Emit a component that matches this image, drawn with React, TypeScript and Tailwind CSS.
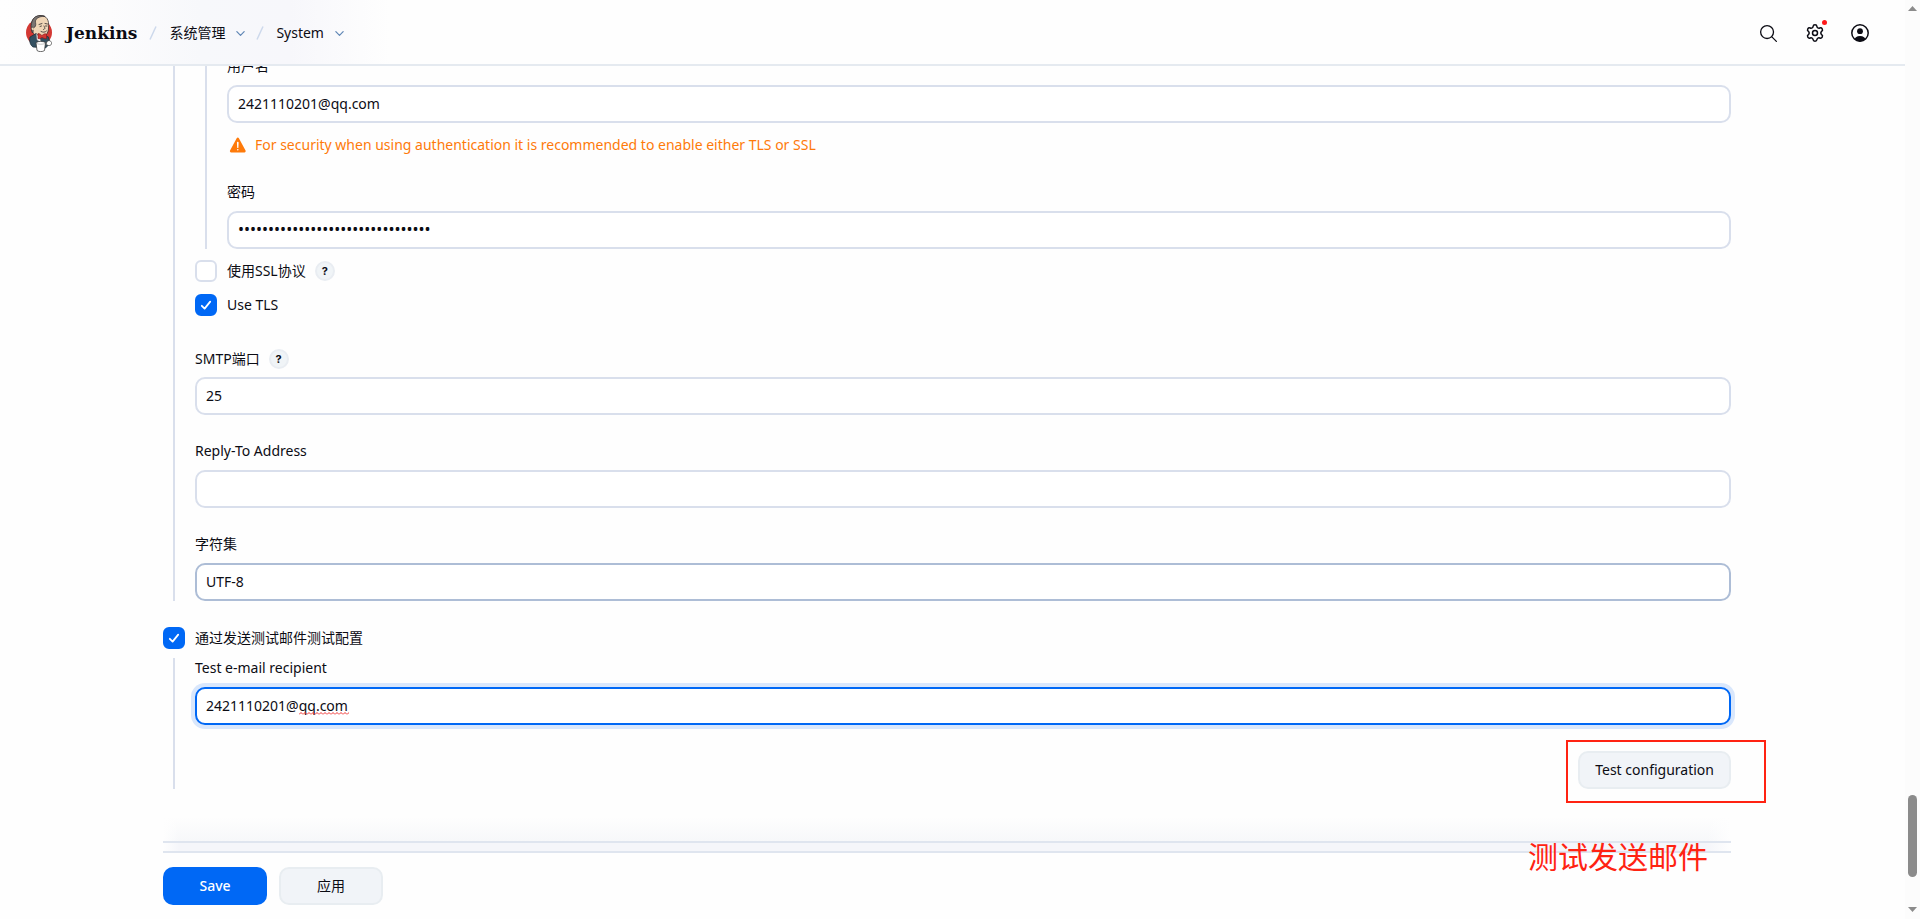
import { useState } from "react";
import type { ReactNode } from "react";
import { Settings } from "lucide-react";
import { IoChevronDown, IoSearchOutline, IoWarning } from "react-icons/io5";

const INPUT =
  "block h-[38px] w-full rounded-[10px] border-2 bg-white px-[9px] pb-[2px] text-[#0c0c14] outline-none";

function JenkinsLogo() {
  return (
    <svg viewBox="0 0 52 74" className="h-[37px] w-[26px]" aria-hidden="true">
      <ellipse cx="26" cy="35" rx="26" ry="26" fill="#d33833" />
      <path d="M11 27C8 13 15 2 29 1c12 0 18 9 16 25 0 11-7 19-16 19S13 37 11 27z" fill="#f0d6b7" stroke="#2f2a2b" strokeWidth="1.5" />
      <path d="M13 36C9 31 9 12 17 5 23 0 33 0 38 3c-7-1-14 1-18 6-3 4 1 8-1 13-2 4-5 3-4 8z" fill="#7a7572" stroke="#2f2a2b" strokeWidth="1.3" />
      <path d="M15 25c-4-2-6 2-3 5 1 2 3 2 4 1" fill="#f0d6b7" stroke="#2f2a2b" strokeWidth="1.2" />
      <path d="M26 19l6-2M38 17l5 1M28 23l3-1M39 22l3 0M36 22c2 4 3 6-1 7M30 33c4 2 8 2 11-1" fill="none" stroke="#2f2a2b" strokeWidth="1.6" strokeLinecap="round" />
      <path d="M8 44l12-7 9 8 9-4 7 3 3 13-9 9-25-2C8 60 6 51 8 44z" fill="#335061" stroke="#1d2f3a" strokeWidth="1.5" />
      <path d="M20 37l7 7 4 12-9-6z" fill="#f4f4f4" stroke="#6d6b6d" />
      <path d="M24 37c4 0 6 3 8 4 3-3 6-4 9-3v9c-4 1-6-1-9-2-3 2-5 3-8 2z" fill="#d33833" stroke="#81181a" strokeWidth="1.2" />
      <path d="M42 53c3-3 8-2 9 2s-2 7-6 6l-5-2z" fill="#fff" stroke="#3a3a3a" strokeWidth="1.3" />
      <path d="M20 55c5-3 14-3 19 0l-2 16c-4 3-11 3-15 0z" fill="#fff" stroke="#3a3a3a" strokeWidth="1.5" />
      <path d="M21 57c5 2 12 2 17 0" fill="none" stroke="#8a8a8a" />
    </svg>
  );
}

function UserIcon() {
  return (
    <svg viewBox="0 0 18 18" className="size-[18px]" aria-hidden="true">
      <clipPath id="user-clip">
        <circle cx="9" cy="9" r="8.5" />
      </clipPath>
      <circle cx="9" cy="9" r="8.2" fill="none" stroke="currentColor" strokeWidth="1.5" />
      <circle cx="9" cy="7.2" r="2.9" fill="currentColor" />
      <ellipse cx="9" cy="16.4" rx="5.8" ry="4.4" fill="currentColor" clipPath="url(#user-clip)" />
    </svg>
  );
}

function Help({ label }: { label: string }) {
  return (
    <button
      type="button"
      aria-label={label}
      className="flex size-5 items-center justify-center rounded-full border-2 border-[#e9edf2] bg-[#f0f4f7] font-['Inter',sans-serif] text-[11px] leading-none font-bold"
    >
      ?
    </button>
  );
}

function Check({
  id,
  defaultChecked,
  children,
}: {
  id: string;
  defaultChecked?: boolean;
  children: ReactNode;
}) {
  return (
    <div className="flex h-[22px] items-center gap-[10px]">
      <span className="grid size-[22px] shrink-0">
        <input
          id={id}
          type="checkbox"
          defaultChecked={defaultChecked}
          className="peer col-start-1 row-start-1 size-[22px] appearance-none rounded-md border-2 border-[#d9dfec] bg-white checked:border-[#0068f5] checked:bg-[#0068f5]"
        />
        <svg
          viewBox="0 0 22 22"
          className="pointer-events-none invisible col-start-1 row-start-1 size-[22px] peer-checked:visible"
          aria-hidden="true"
        >
          <path d="M6.8 11.8l2.8 2.8 5.6-7" fill="none" stroke="#fff" strokeWidth="1.8" strokeLinecap="round" strokeLinejoin="round" />
        </svg>
      </span>
      <label htmlFor={id}>{children}</label>
    </div>
  );
}

function Crumb({ children }: { children: string }) {
  return (
    <>
      <svg viewBox="0 0 8 14" className="h-[14px] w-2" aria-hidden="true">
        <path d="M7 .5L1 13.5" stroke="#cdd9ec" strokeWidth="1.5" fill="none" />
      </svg>
      <a href="#" className="ml-3">
        {children}
      </a>
      <button type="button" aria-label={`${children} menu`} className="mx-[9px] text-[#5f86b5]">
        <IoChevronDown className="size-[13px]" />
      </button>
    </>
  );
}

export default function App() {
  const [username, setUsername] = useState("2421110201@qq.com");
  const [recipient, setRecipient] = useState("2421110201@qq.com");

  return (
    <div className="flex h-screen overflow-hidden bg-[#fefefe] font-['Noto_Sans','Noto_Sans_CJK_SC',sans-serif] text-[14px] leading-5 text-[#0c0c14]">
      <div className="min-w-0 flex-1">
        {/* Header */}
        <header className="relative z-10 flex h-[66px] items-center border-b-2 border-[#e5eaf0] bg-[#fefefe] bg-[linear-gradient(90deg,#fefefe_0px,#fcfcfd_110px,#f7f8fb_200px,#f7f7fb_290px,#fefefe_390px)] pt-[2px] pr-9 pl-[26px]">
          <a href="#" className="mr-3 flex items-center gap-[14px]">
            <JenkinsLogo />
            <span className="font-['DejaVu_Serif',serif] text-[17px] font-bold">Jenkins</span>
          </a>
          <nav className="flex items-center">
            <Crumb>系统管理</Crumb>
            <Crumb>System</Crumb>
          </nav>
          <div className="ml-auto flex items-center gap-[26px]">
            <button type="button" aria-label="Search">
              <IoSearchOutline className="size-[21px]" />
            </button>
            <button type="button" aria-label="Manage" className="relative">
              <Settings className="size-5" strokeWidth={1.8} />
              <span className="absolute -top-[3px] -right-[2px] size-[5px] rounded-full bg-[#ff1a1a]" />
            </button>
            <button type="button" aria-label="User">
              <UserIcon />
            </button>
          </div>
        </header>

        <main className="-mt-[10px] pr-[174px] pl-[163px]">
          <section className="ml-[10px] border-l-2 border-[#d9dfec] pl-5">
            <div className="ml-[10px] border-l-2 border-[#d9dfec] pl-5">
              <label htmlFor="username" className="mb-[9px] block">
                用户名
              </label>
              <input
                id="username"
                value={username}
                onChange={(e) => setUsername(e.target.value)}
                className={`${INPUT} border-[#d9dfec]`}
              />
              <div className="mt-3 flex items-center gap-[7px] pl-px text-[#fe7a0a]">
                <IoWarning className="size-5" />
                For security when using authentication it is recommended to enable either TLS or SSL
              </div>
              <label htmlFor="password" className="mt-[27px] mb-[9px] block">
                密码
              </label>
              <input
                id="password"
                type="password"
                defaultValue="00000000000000000000000000000000"
                className={`${INPUT} border-[#d9dfec] text-[16px]`}
              />
            </div>

            <div className="mt-[11px] flex items-center gap-[9px]">
              <Check id="ssl">使用SSL协议</Check>
              <Help label="Help for SSL" />
            </div>
            <div className="mt-3">
              <Check id="tls" defaultChecked>
                Use TLS
              </Check>
            </div>

            <div className="mt-[33px] mb-2 flex items-center gap-[9px]">
              <label htmlFor="port">SMTP端口</label>
              <Help label="Help for SMTP port" />
            </div>
            <input id="port" defaultValue="25" className={`${INPUT} border-[#d9dfec]`} />

            <label htmlFor="reply-to" className="mt-[26px] mb-[9px] block">
              Reply-To Address
            </label>
            <input id="reply-to" className={`${INPUT} border-[#d9dfec]`} />

            <label htmlFor="charset" className="mt-[26px] mb-[9px] block">
              字符集
            </label>
            <input id="charset" defaultValue="UTF-8" className={`${INPUT} border-[#adbdd6]`} />
          </section>

          <div className="mt-[26px]">
            <Check id="send-test" defaultChecked>
              通过发送测试邮件测试配置
            </Check>
          </div>
          <section className="mt-[9px] ml-[10px] border-l-2 border-[#d9dfec] pl-5">
            <label htmlFor="recipient" className="mb-[9px] block">
              Test e-mail recipient
            </label>
            <div className="relative">
              <input
                id="recipient"
                value={recipient}
                onChange={(e) => setRecipient(e.target.value)}
                spellCheck={false}
                className={`${INPUT} border-[#0068f5] ring-4 ring-[#d9e7fc]`}
              />
              <svg className="absolute top-[25px] left-[104px] h-[3px] w-[50px]" aria-hidden="true">
                <pattern id="squiggle" width="4" height="3" patternUnits="userSpaceOnUse">
                  <path d="M0 2.5L2 .5 4 2.5" fill="none" stroke="#f03030" strokeWidth="1" />
                </pattern>
                <rect width="50" height="3" fill="url(#squiggle)" />
              </svg>
            </div>
            <div className="mt-[26px] flex justify-end">
              <div className="relative">
                <button type="button" className="h-[38px] rounded-[10px] border-2 border-[#e8edf1] bg-[#f1f4f8] px-[15px]">
                  Test configuration
                </button>
                {/* Annotation drawn over the page */}
                <div className="pointer-events-none absolute -top-[11px] -right-[35px] -bottom-[14px] -left-3 border-2 border-[#ff2312]" />
                <span className="pointer-events-none absolute top-[86px] right-[23px] text-[30px] leading-10 whitespace-nowrap text-[#ff2312]">
                  测试发送邮件
                </span>
              </div>
            </div>
          </section>

          <div className="mt-7 h-6 bg-[linear-gradient(90deg,#fefefe,transparent_16px,transparent_calc(100%-24px),#fefefe),linear-gradient(180deg,#fefefe,#f7f8fa)]" />
          <div className="h-3 border-y-2 border-[#dfe5ef] bg-[linear-gradient(90deg,#fefefe,#f5f6fa_16px,#f5f6fa_calc(100%-24px),#fefefe)]" />
          <div className="flex gap-3 pt-[14px]">
            <button type="submit" className="h-[38px] w-[104px] rounded-[10px] bg-[#0068f5] font-medium text-white">
              Save
            </button>
            <button type="button" className="h-[38px] w-[104px] rounded-[10px] border-2 border-[#e8edf1] bg-[#f1f4f8]">
              应用
            </button>
          </div>
        </main>
      </div>

      {/* Scrollbar */}
      <div className="flex w-[15px] shrink-0 flex-col items-center bg-[#fcfcfc] pt-[6px] pb-[7px]" aria-hidden="true">
        <svg viewBox="0 0 9 5" className="h-[5px] w-[9px]">
          <path d="M0 5L4.5 0 9 5z" fill="#8b8b8b" />
        </svg>
        <div className="mt-auto mb-[30px] h-[82px] w-[9px] rounded-full bg-[#8b8b8b]" />
        <svg viewBox="0 0 9 5" className="h-[5px] w-[9px]">
          <path d="M0 0L4.5 5 9 0z" fill="#8b8b8b" />
        </svg>
      </div>
    </div>
  );
}
